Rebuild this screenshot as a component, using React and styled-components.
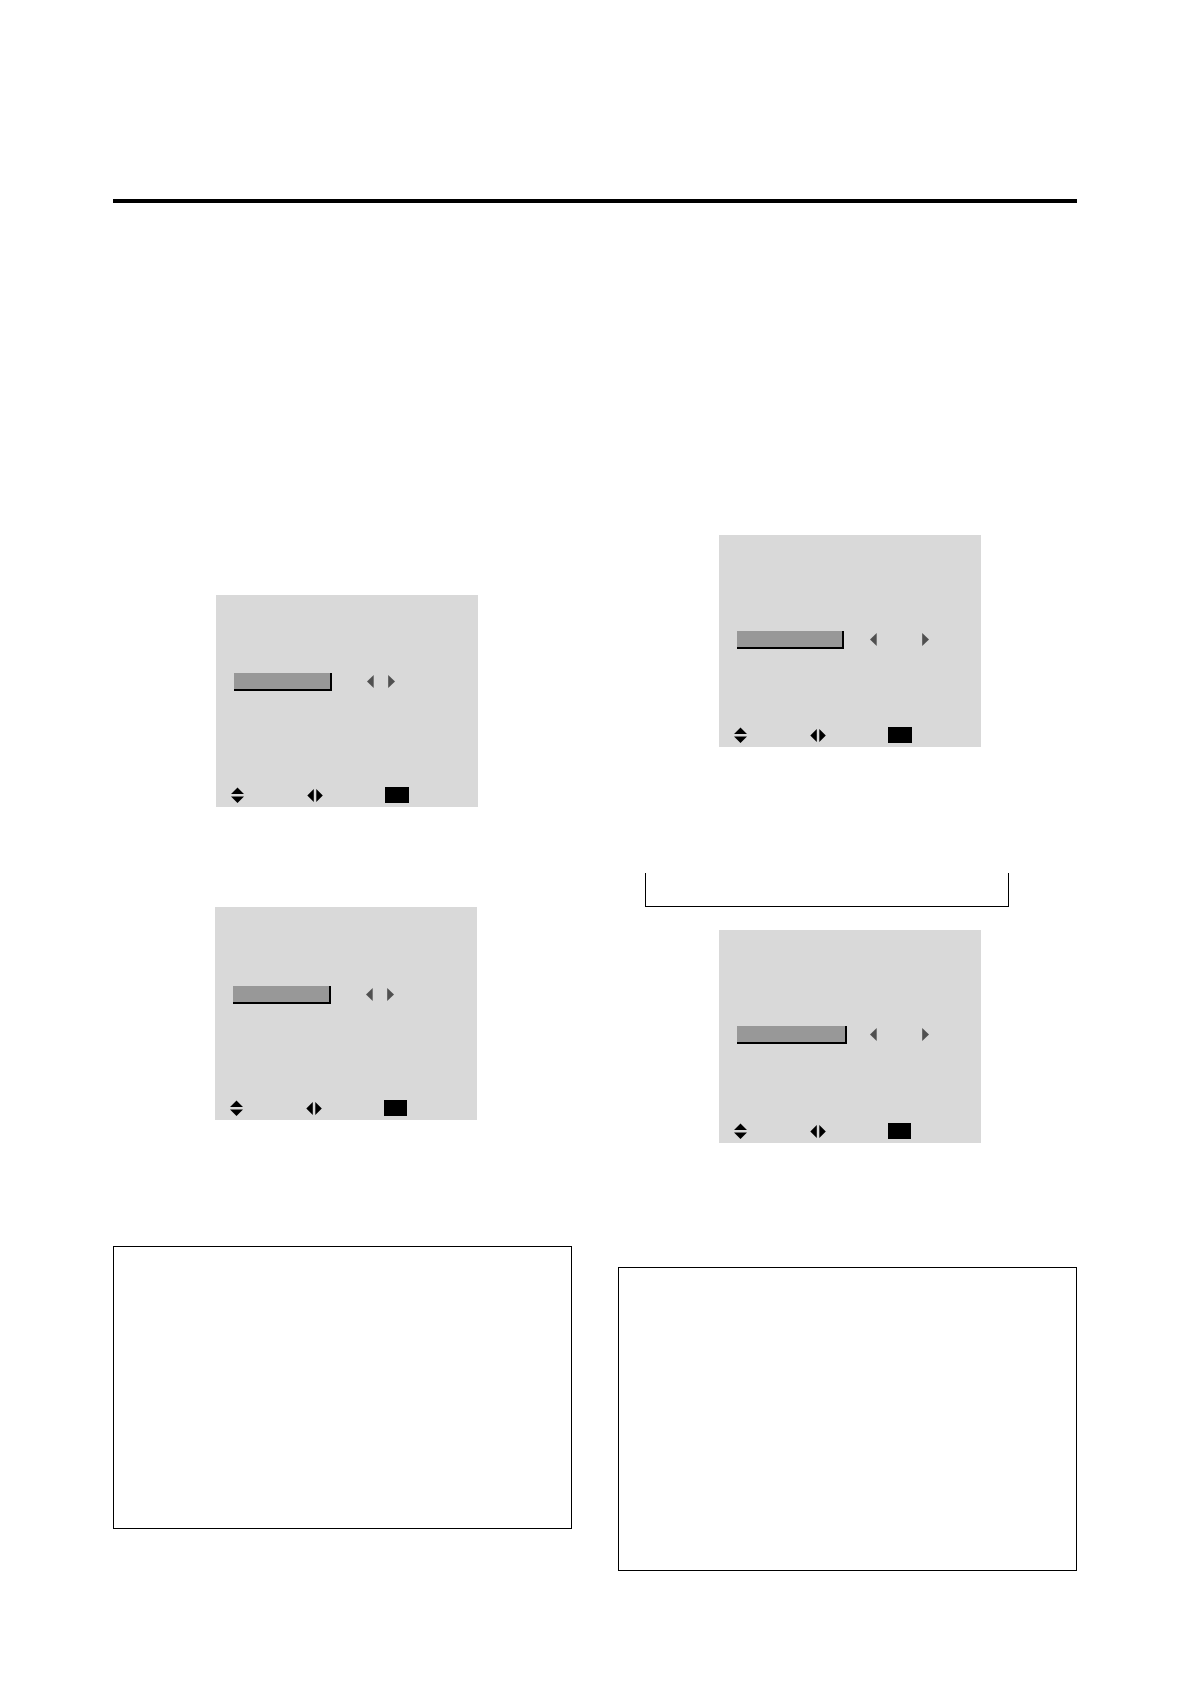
import React from "react";
import styled, { createGlobalStyle } from "styled-components";

const GlobalStyle = createGlobalStyle`
  * {
    box-sizing: border-box;
  }

  body {
    margin: 0;
    background: #fff;
    color: #000;
    font-family: "Liberation Sans", Arial, sans-serif;
  }
`;

const Page = styled.main`
  padding: 199px 113px 112px;
`;

const HeaderRule = styled.hr`
  height: 4px;
  margin: 0;
  border: 0;
  background: #000;
`;

const Columns = styled.div`
  display: grid;
  grid-template-columns: 1fr 1fr;
  gap: 46px;
  align-items: start;
`;

const Column = styled.section`
  display: flex;
  flex-direction: column;
  padding-top: ${(p) => p.$top}px;
`;

const Screen = styled.div`
  display: flex;
  flex-direction: column;
  justify-content: space-between;
  width: 262px;
  height: ${(p) => p.$height}px;
  margin-left: ${(p) => p.$inset}px;
  padding: ${(p) => p.$top}px 15px 4px;
  background: #d9d9d9;
`;

const SettingRow = styled.div`
  display: grid;
  grid-template-columns: 133px auto;
  align-items: center;
  padding-left: 3px;
`;

const Highlight = styled.div`
  width: ${(p) => p.$width}px;
  height: 18px;
  background: #989898;
  border: solid #000;
  border-width: 0 2px 2px 0;
`;

const Stepper = styled.div`
  display: flex;
  gap: ${(p) => p.$gap}px;
`;

const StepButton = styled.button`
  display: block;
  width: 7px;
  height: 14px;
  padding: 0;
  border: 0;
  background: none;
  color: #505050;

  svg {
    display: block;
  }
`;

const KeyBar = styled.div`
  display: grid;
  grid-template-columns: 76px 78px auto;
  align-items: center;

  svg {
    display: block;
  }
`;

const KeyLabel = styled.div`
  width: ${(p) => p.$width}px;
  height: 16px;
  background: #000;
`;

const Bracket = styled.div`
  height: 34px;
  margin: 126px 68px 23px 27px;
  border: solid #000;
  border-width: 0 1px 1px;
`;

const NoteBox = styled.aside`
  height: ${(p) => p.$height}px;
  margin-top: ${(p) => p.$gap}px;
  border: 1px solid #000;
`;

const Spacer = styled.div`
  height: 100px;
`;

function OsdScreen({ inset, height, top, barWidth, valueWidth, keyWidth }) {
  return (
    <Screen $inset={inset} $height={height} $top={top}>
      <SettingRow>
        <Highlight $width={barWidth} />
        <Stepper $gap={valueWidth}>
          <StepButton type="button" aria-label="Previous value">
            <svg width="7" height="14" viewBox="0 0 7 14" fill="currentColor">
              <path d="M6.7 0v13L0 6.5z" />
            </svg>
          </StepButton>
          <StepButton type="button" aria-label="Next value">
            <svg width="7" height="14" viewBox="0 0 7 14" fill="currentColor">
              <path d="M.2 0v13L7 6.5z" />
            </svg>
          </StepButton>
        </Stepper>
      </SettingRow>
      <KeyBar>
        <svg width="13" height="16" viewBox="0 0 13 16" aria-hidden="true">
          <path d="M6.5 .5L13 7H0zM0 9.5h13L6.5 16z" />
        </svg>
        <svg width="16" height="14" viewBox="0 0 16 14" aria-hidden="true">
          <path d="M6.8 1v13L.3 7.5zM9.3 1v13L15.8 7.5z" />
        </svg>
        <KeyLabel $width={keyWidth} />
      </KeyBar>
    </Screen>
  );
}

export default function App() {
  return (
    <>
      <GlobalStyle />
      <Page>
        <HeaderRule />
        <Columns>
          <Column $top={392}>
            <OsdScreen inset={103} height={212} top={78} barWidth={98} valueWidth={14} keyWidth={24} />
            <Spacer />
            <OsdScreen inset={102} height={213} top={79} barWidth={98} valueWidth={14} keyWidth={23} />
            <NoteBox $gap={126} $height={283} />
          </Column>
          <Column $top={332}>
            <OsdScreen inset={101} height={212} top={96} barWidth={107} valueWidth={45} keyWidth={24} />
            <Bracket />
            <OsdScreen inset={101} height={213} top={96} barWidth={110} valueWidth={45} keyWidth={23} />
            <NoteBox $gap={124} $height={304} />
          </Column>
        </Columns>
      </Page>
    </>
  );
}
